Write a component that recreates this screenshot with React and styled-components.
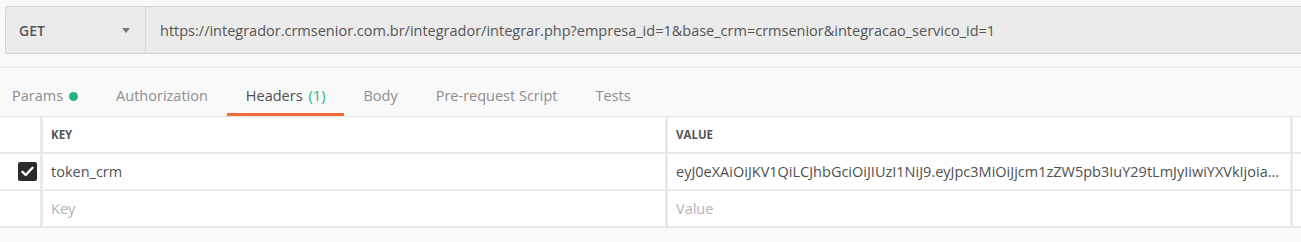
import React from "react";
import styled, { createGlobalStyle } from "styled-components";

const Global = createGlobalStyle`
  html, body { margin: 0; padding: 0; background: #f9f9f9; }
  body { font-family: "Open Sans", "Noto Sans", sans-serif; color: #505050; }
  * { box-sizing: border-box; }
`;

const Page = styled.div`
  width: 1301px;
  height: 242px;
  overflow: hidden;
  background: #f9f9f9;
  padding-top: 6px;
`;

const RequestBar = styled.div`
  display: flex;
  margin-left: 5px;
  height: 48px;
  background: #ebebeb;
  border: 1px solid #d5d5d5;
  border-right: none;
  border-radius: 3px 0 0 3px;
`;

const MethodSelect = styled.div`
  width: 140px;
  display: flex;
  align-items: center;
  justify-content: space-between;
  padding: 0 15px 0 13px;
  border-right: 1px solid #d5d5d5;
  font-size: 14px;
  font-weight: 600;
  color: #585858;
`;

const Caret = styled.span`
  width: 0;
  height: 0;
  border-left: 4px solid transparent;
  border-right: 4px solid transparent;
  border-top: 5px solid #777;
`;

const UrlText = styled.div`
  display: flex;
  align-items: center;
  padding-left: 14px;
  font-size: 14.5px;
  color: #555;
  white-space: nowrap;
`;

const TabBar = styled.div`
  display: flex;
  margin-top: 12px;
  border-top: 2px solid #efefef;
  border-bottom: 1px solid #e4e4e4;
  height: 51px;
`;

const Tab = styled.div`
  display: flex;
  align-items: center;
  padding: 10px 19px 0;
  font-size: 14.5px;
  color: ${(p) => (p.$active ? "#505050" : "#8d8d8d")};
  border-bottom: 3px solid ${(p) => (p.$active ? "#f26b3a" : "transparent")};
  white-space: nowrap;
  &:first-child { padding-left: 12px; }
`;

const Count = styled.span`
  color: #26b47f;
  margin-left: 6px;
`;

const Dot = styled.span`
  width: 9px;
  height: 9px;
  border-radius: 50%;
  background: #26b47f;
  margin-left: 6px;
  margin-top: 1px;
`;

const Table = styled.div`
  display: grid;
  grid-template-columns: 40px 622px 622px 1fr;
  grid-auto-rows: 35px;
  column-gap: 3px;
  row-gap: 2px;
  background: #e9e9e9;
  border-bottom: 2px solid #e9e9e9;
`;

const Cell = styled.div`
  background: #fff;
  display: flex;
  align-items: center;
  padding-left: ${(p) => (p.$narrow ? "0" : "8px")};
  justify-content: ${(p) => (p.$narrow ? "flex-end" : "flex-start")};
  padding-right: ${(p) => (p.$narrow ? "3px" : "8px")};
  font-size: 14.5px;
  color: ${(p) => (p.$placeholder ? "#b3b3b3" : "#505050")};
  white-space: nowrap;
  overflow: hidden;
`;

const HeadLabel = styled.span`
  font-size: 11.5px;
  font-weight: 700;
  color: #555;
  text-transform: uppercase;
`;

const Check = styled.span`
  width: 19px;
  height: 19px;
  border-radius: 2px;
  background: #2b2b2b;
  display: flex;
  align-items: center;
  justify-content: center;
`;

const CheckBox = () => (
  <Check>
    <svg width="13" height="11" viewBox="0 0 13 11">
      <path d="M1.5 5.8 L4.8 9 L11.5 1.8" fill="none" stroke="#fff" strokeWidth="2.4" strokeLinecap="round" strokeLinejoin="round" />
    </svg>
  </Check>
);

export default function App() {
  return (
    <Page>
      <Global />
      <RequestBar>
        <MethodSelect>
          GET
          <Caret />
        </MethodSelect>
        <UrlText>
          https://integrador.crmsenior.com.br/integrador/integrar.php?empresa_id=1&amp;base_crm=crmsenior&amp;integracao_servico_id=1
        </UrlText>
      </RequestBar>
      <TabBar>
        <Tab>
          Params
          <Dot />
        </Tab>
        <Tab>Authorization</Tab>
        <Tab $active>
          Headers<Count>(1)</Count>
        </Tab>
        <Tab>Body</Tab>
        <Tab>Pre-request Script</Tab>
        <Tab>Tests</Tab>
      </TabBar>
      <Table>
        <Cell $narrow />
        <Cell>
          <HeadLabel>Key</HeadLabel>
        </Cell>
        <Cell>
          <HeadLabel>Value</HeadLabel>
        </Cell>
        <Cell />

        <Cell $narrow>
          <CheckBox />
        </Cell>
        <Cell>token_crm</Cell>
        <Cell>eyJ0eXAiOiJKV1QiLCJhbGciOiJIUzI1NiJ9.eyJpc3MiOiJjcm1zZW5pb3IuY29tLmJyIiwiYXVkIjoia...</Cell>
        <Cell />

        <Cell $narrow />
        <Cell $placeholder>Key</Cell>
        <Cell $placeholder>Value</Cell>
        <Cell />
      </Table>
    </Page>
  );
}
